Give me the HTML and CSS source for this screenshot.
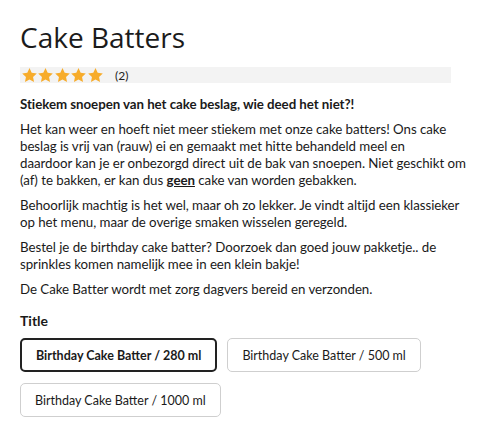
FILE: index.html
```html
<!DOCTYPE html>
<html lang="nl">
<head>
<meta charset="utf-8">
<link rel="stylesheet" href="styles.css">
</head>
<body>
<main class="product">
  <h1 class="title">Cake Batters</h1>
  <div class="rating">
    <span class="stars">
      <svg viewBox="0 0 24 24" class="star"><path d="M12 1.5l3.1 6.6 7.2.9-5.3 5 1.4 7.1L12 17.6l-6.4 3.5 1.4-7.1-5.3-5 7.2-.9z"/></svg>
      <svg viewBox="0 0 24 24" class="star"><path d="M12 1.5l3.1 6.6 7.2.9-5.3 5 1.4 7.1L12 17.6l-6.4 3.5 1.4-7.1-5.3-5 7.2-.9z"/></svg>
      <svg viewBox="0 0 24 24" class="star"><path d="M12 1.5l3.1 6.6 7.2.9-5.3 5 1.4 7.1L12 17.6l-6.4 3.5 1.4-7.1-5.3-5 7.2-.9z"/></svg>
      <svg viewBox="0 0 24 24" class="star"><path d="M12 1.5l3.1 6.6 7.2.9-5.3 5 1.4 7.1L12 17.6l-6.4 3.5 1.4-7.1-5.3-5 7.2-.9z"/></svg>
      <svg viewBox="0 0 24 24" class="star"><path d="M12 1.5l3.1 6.6 7.2.9-5.3 5 1.4 7.1L12 17.6l-6.4 3.5 1.4-7.1-5.3-5 7.2-.9z"/></svg>
    </span>
    <span class="count">(2)</span>
  </div>
  <div class="description">
    <p><strong>Stiekem snoepen van het cake beslag, wie deed het niet?!</strong></p>
    <p>Het kan weer en hoeft niet meer stiekem met onze cake batters! Ons cake beslag is vrij van (rauw) ei en gemaakt met hitte behandeld meel en<br>daardoor kan je er onbezorgd direct uit de bak van snoepen. Niet geschikt om (af) te bakken, er kan dus <strong class="u">geen</strong> cake van worden gebakken.</p>
    <p>Behoorlijk machtig is het wel, maar oh zo lekker. Je vindt altijd een klassieker op het menu, maar de overige smaken wisselen geregeld.</p>
    <p>Bestel je de birthday cake batter? Doorzoek dan goed jouw pakketje.. de sprinkles komen namelijk mee in een klein bakje!</p>
    <p>De Cake Batter wordt met zorg dagvers bereid en verzonden.</p>
  </div>
  <div class="option">
    <div class="option-label">Title</div>
    <div class="choices">
      <button class="choice selected">Birthday Cake Batter / 280 ml</button>
      <button class="choice">Birthday Cake Batter / 500 ml</button>
      <button class="choice">Birthday Cake Batter / 1000 ml</button>
    </div>
  </div>
</main>
</body>
</html>
```
FILE: styles.css
```css
* { box-sizing: border-box; }
html, body { margin: 0; background: #fff; }
body {
  font-family: Lato, "Noto Sans", sans-serif;
  color: #1a1a1a;
}
.product { padding: 19px 0 0 20px; }
.title {
  font-family: "Open Sans", sans-serif;
  font-weight: 400;
  font-size: 28px;
  line-height: 36px;
  margin: 0 0 12px;
  color: #1b1b1b;
}
.rating {
  display: flex;
  align-items: center;
  background: #f3f3f3;
  height: 16px;
  width: 431px;
}
.stars { display: flex; padding-left: 1px; }
.star { width: 17px; height: 17px; fill: #f7ac2b; margin-right: -0.6px; }
.count { font-size: 12px; margin-left: 12px; color: #222; }
.description { width: 449px; font-size: 13.3px; letter-spacing: -0.05px; line-height: 17px; margin-top: 13px; }
.description p { margin: 0 0 8px; }
.description strong { font-weight: 700; }
.u { text-decoration: underline; }
.option { margin-top: 14px; }
.option-label { font-weight: 700; font-size: 14px; margin-bottom: 9px; }
.choices { display: flex; flex-wrap: wrap; gap: 11px 10px; width: 440px; }
.choice {
  font-family: Lato, "Noto Sans", sans-serif;
  font-size: 12.5px;
  height: 34px;
  padding: 0 14px;
  background: #fff;
  color: #1a1a1a;
  border: 1px solid #cfcfcf;
  border-radius: 5px;
}
.choice.selected { border: 2px solid #222; font-weight: 700; }
```
